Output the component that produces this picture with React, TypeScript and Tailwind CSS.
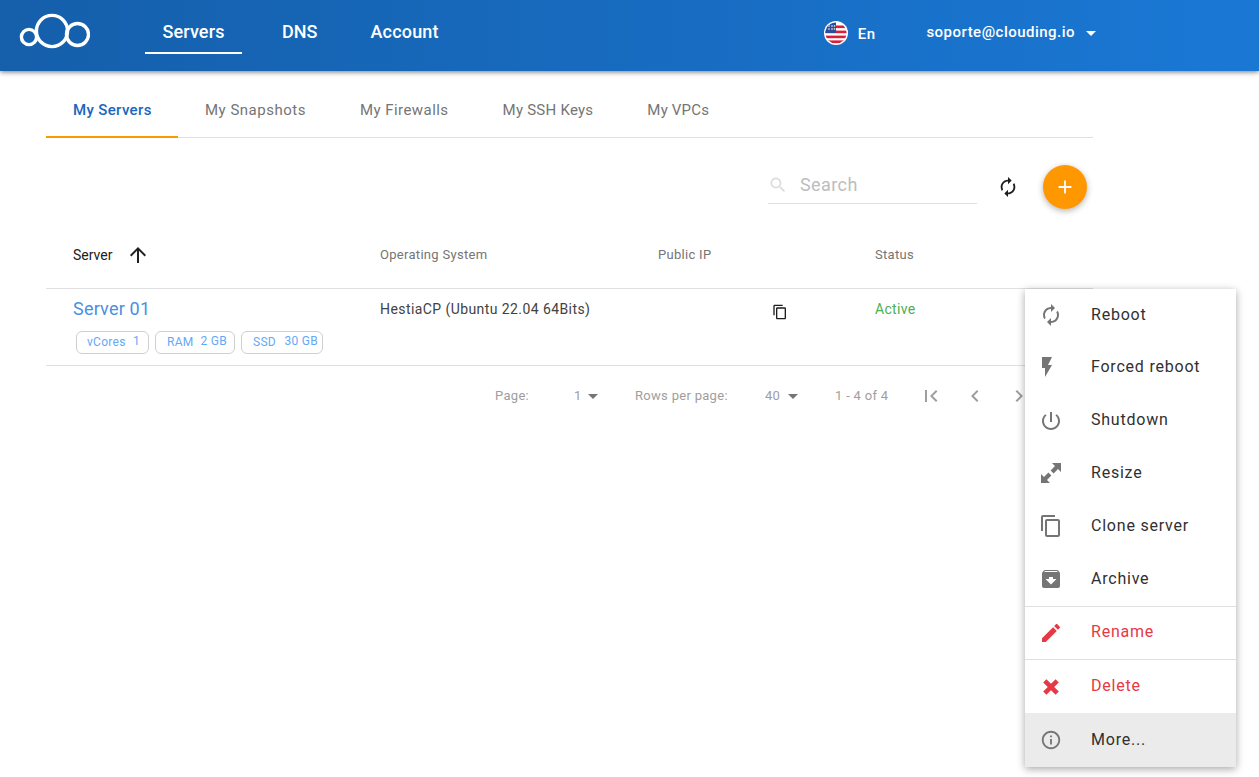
import React from 'react';

const tabs = [
  { label: 'My Snapshots', tracking: 'tracking-[0.5px]' },
  { label: 'My Firewalls', tracking: 'tracking-[0.45px]' },
  { label: 'My SSH Keys', tracking: 'tracking-[0.25px]' },
  { label: 'My VPCs', tracking: 'tracking-[0.2px]' },
];

const Icon: React.FC<{ d: string; className?: string }> = ({ d, className }) => (
  <svg viewBox="0 0 24 24" fill="currentColor" className={className}>
    <path d={d} />
  </svg>
);

const ICONS = {
  renew: 'M12 6v3l4-4-4-4v3c-4.42 0-8 3.58-8 8 0 1.57.46 3.03 1.24 4.26L6.7 14.8c-.45-.83-.7-1.79-.7-2.8 0-3.31 2.69-6 6-6zm6.76 1.74L17.3 9.2c.44.84.7 1.79.7 2.8 0 3.31-2.69 6-6 6v-3l-4 4 4 4v-3c4.42 0 8-3.58 8-8 0-1.57-.46-3.03-1.24-4.26z',
  flash: 'M7 2v11h3v9l7-12h-4l4-8z',
  power: 'M13 3h-2v10h2V3zm4.83 2.17l-1.42 1.42C17.99 7.86 19 9.81 19 12c0 3.87-3.13 7-7 7s-7-3.13-7-7c0-2.19 1.01-4.14 2.58-5.42L6.17 5.17C4.23 6.82 3 9.26 3 12c0 4.97 4.03 9 9 9s9-4.03 9-9c0-2.74-1.23-5.18-3.17-6.83z',
  resize: 'M22 2H13l3 3-4.4 4.4 3 3L19 8l3 3zM2 22h9l-3-3 4.4-4.4-3-3L5 16l-3-3z',
  copy: 'M16 1H4c-1.1 0-2 .9-2 2v14h2V3h12V1zm3 4H8c-1.1 0-2 .9-2 2v14c0 1.1.9 2 2 2h11c1.1 0 2-.9 2-2V7c0-1.1-.9-2-2-2zm0 16H8V7h11v14z',
  archive: 'M20.54 5.23l-1.39-1.68C18.88 3.21 18.47 3 18 3H6c-.47 0-.88.21-1.16.55L3.46 5.23C3.17 5.57 3 6.02 3 6.5V19c0 1.1.9 2 2 2h14c1.1 0 2-.9 2-2V6.5c0-.48-.17-.93-.46-1.27zM12 17.5L6.5 12H10v-2h4v2h3.5L12 17.5zM5.12 5l.81-1h12l.94 1H5.12z',
  edit: 'M3 17.25V21h3.75L17.81 9.94l-3.75-3.75L3 17.25zM20.71 7.04c.39-.39.39-1.02 0-1.41l-2.34-2.34c-.39-.39-1.02-.39-1.41 0l-1.83 1.83 3.75 3.75 1.83-1.83z',
  close: 'M7 3.5L12 8.5L17 3.5L20.5 7L15.5 12L20.5 17L17 20.5L12 15.5L7 20.5L3.5 17L8.5 12L3.5 7z',
  info: 'M11 7h2v2h-2zm0 4h2v6h-2zm1-9C6.48 2 2 6.48 2 12s4.48 10 10 10 10-4.48 10-10S17.52 2 12 2zm0 18c-4.41 0-8-3.59-8-8s3.59-8 8-8 8 3.59 8 8-3.59 8-8 8z',
  first: 'M18.41 16.59L13.82 12l4.59-4.59L17 6l-6 6 6 6zM6 6h2v12H6z',
  prev: 'M15.41 7.41L14 6l-6 6 6 6 1.41-1.41L10.83 12z',
  next: 'M10 6L8.59 7.41 13.17 12l-4.58 4.59L10 18l6-6z',
  up: 'M4 12l1.41 1.41L11 7.83V20h2V7.83l5.58 5.59L20 12l-8-8-8 8z',
  search: 'M15.5 14h-.79l-.28-.27C15.41 12.59 16 11.11 16 9.5 16 5.91 13.09 3 9.5 3S3 5.91 3 9.5 5.91 16 9.5 16c1.61 0 3.09-.59 4.23-1.57l.27.28v.79l5 4.99L20.49 19l-4.99-5zm-6 0C7.01 14 5 11.99 5 9.5S7.01 5 9.5 5 14 7.01 14 9.5 11.99 14 9.5 14z',
  plus: 'M19 13h-6v6h-2v-6H5v-2h6V5h2v6h6v2z',
};

const menuItems = [
  { label: 'Reboot', icon: ICONS.renew, row: 'h-[52px]', text: '', iconPos: '' },
  { label: 'Forced reboot', icon: ICONS.flash, row: 'h-[53px] pb-[2px]', text: '', iconPos: '-translate-x-[4px]' },
  { label: 'Shutdown', icon: ICONS.power, row: 'h-[53px]', text: 'mb-[2px]', iconPos: '' },
  { label: 'Resize', icon: ICONS.resize, row: 'h-[53px] pb-[2px]', text: '', iconPos: '' },
  { label: 'Clone server', icon: ICONS.copy, row: 'h-[53px] pb-[2px]', text: '', iconPos: '' },
  { label: 'Archive', icon: ICONS.archive, row: 'h-[53px] pb-[2px]', text: '', iconPos: '' },
];

const Logo = () => (
  <svg viewBox="0 5 90 60" className="h-[60px] w-[90px]" fill="none" stroke="white" strokeWidth="3.4">
    <circle cx="29" cy="36" r="7.6" />
    <circle cx="52" cy="30" r="15.6" />
    <circle cx="77.5" cy="33.5" r="11" />
  </svg>
);

const Flag = () => (
  <svg viewBox="0 0 24 24" className="h-[24px] w-[24px]">
    <defs>
      <clipPath id="flag">
        <circle cx="12" cy="12" r="10.6" />
      </clipPath>
    </defs>
    <circle cx="12" cy="12" r="12" fill="white" />
    <g clipPath="url(#flag)">
      <rect width="24" height="24" fill="white" />
      <rect y="4.5" width="24" height="2.6" fill="#d8203a" />
      <rect y="9.6" width="24" height="2.6" fill="#d8203a" />
      <rect y="14.6" width="24" height="2.6" fill="#d8203a" />
      <rect y="19.4" width="24" height="3" fill="#d8203a" />
      <rect width="12" height="12" fill="#2b4d9b" />
      <circle cx="5" cy="5" r="0.8" fill="white" />
      <circle cx="8" cy="5" r="0.8" fill="white" />
      <circle cx="5" cy="8" r="0.8" fill="white" />
      <circle cx="8" cy="8" r="0.8" fill="white" />
      <circle cx="10.5" cy="8" r="0.8" fill="white" />
      <circle cx="10.5" cy="5" r="0.8" fill="white" />
    </g>
  </svg>
);

const Chip: React.FC<{ label: string; value: string; className: string }> = ({ label, value, className }) => (
  <div className={`flex h-[23px] items-center justify-between rounded-[6px] border border-[#cfcfcf] text-[12px] text-[#64a9f7] ${className}`}>
    <span className="mb-[1px] tracking-[0.3px]">{label}</span>
    <span className="mb-[3px] tracking-[0.3px]">{value}</span>
  </div>
);

const Caret = () => <span className="h-0 w-0 border-x-[5px] border-t-[5px] border-x-transparent border-t-[#757575]" />;

export default function App() {
  return (
    <div className="relative h-[777px] overflow-hidden bg-white font-['Roboto',sans-serif]">
      <header className="relative z-10 flex h-[71px] items-center bg-gradient-to-r from-[#155fab] to-[#1a78d5] pr-[162px] text-white shadow-[0_1px_5px_rgba(0,0,0,0.55)]">
        <div className="w-[145px]">
          <Logo />
        </div>
        <nav className="flex h-full items-start text-[18px] font-medium">
          <div className="mt-[10px] flex h-[44px] w-[97px] items-center justify-center border-b-2 border-white pt-[1px] tracking-[0.15px]">Servers</div>
          <div className="mt-[10px] ml-[40px] flex h-[44px] items-center pb-[1px]">DNS</div>
          <div className="mt-[10px] ml-[53px] flex h-[44px] items-center pb-[1px] tracking-[0.2px]">Account</div>
        </nav>
        <div className="mb-[5px] ml-auto mr-[1px] flex items-center gap-[10px]">
          <Flag />
          <span className="mt-[2px] text-[15px] font-medium tracking-[0.4px]">En</span>
        </div>
        <span className="mb-[6px] ml-[50px] text-[15px] font-medium tracking-[0.48px]">soporte@clouding.io</span>
        <span className="mb-[5px] ml-[11px] mr-[1px] h-0 w-0 border-x-[5.5px] border-t-[5px] border-x-transparent border-t-white" />
      </header>

      <main className="ml-[46px] w-[1047px]">
        <div className="mt-[14px] flex h-[53px] border-b border-[#e0e0e0] text-[15px] text-[#757575]">
          <div className="flex h-[53px] w-[132px] items-center border-b-2 border-[#ff9800] pb-[1px] pl-[27px] font-medium tracking-[0.36px] text-[#1a66bd]">My Servers</div>
          {tabs.map(t => (
            <div key={t.label} className={`flex h-[53px] items-center px-[27px] pb-[3px] ${t.tracking}`}>
              {t.label}
            </div>
          ))}
        </div>

        <div className="mt-[27px] flex h-[44px] items-center justify-end pr-[6px]">
          <div className="mb-[2px] mr-[20px] flex h-[36px] w-[209px] items-center border-b border-[#e0e0e0] pb-[2px] text-[#bdbdbd]">
            <Icon d={ICONS.search} className="h-[20px] w-[20px] text-[#dcdcdc]" />
            <span className="ml-[12px] text-[18px] tracking-[0.4px]">Search</span>
          </div>
          <Icon d={ICONS.renew} className="mr-[24px] h-[22px] w-[22px] text-[#1d1d1d]" />
          <div className="flex h-[44px] w-[44px] items-center justify-center rounded-full bg-[#ff9800] text-white shadow-[0_2px_6px_rgba(0,0,0,0.3)]">
            <Icon d={ICONS.plus} className="h-[22px] w-[22px]" />
          </div>
        </div>

        <div className="mt-[27px] grid h-[53px] grid-cols-[307px_278px_217px_1fr] items-center border-b border-[#e0e0e0] pb-[14px] pl-[27px] text-[13px] tracking-[0.3px] text-[#757575]">
          <div className="flex items-center text-[#212121]">
            <span className="text-[14px] tracking-[0px]">Server</span>
            <Icon d={ICONS.up} className="ml-[14px] h-[24px] w-[24px] text-[#212121]" />
          </div>
          <div>Operating System</div>
          <div>Public IP</div>
          <div>Status</div>
        </div>

        <div className="grid h-[77px] grid-cols-[307px_278px_217px_1fr] border-b border-[#e0e0e0] pl-[27px]">
          <div>
            <div className="mt-[8px] text-[18px] leading-[24px] tracking-[0.2px] text-[#4a90e2]">Server 01</div>
            <div className="ml-[3px] mt-[10px] flex gap-[6px]">
              <Chip label="vCores" value="1" className="w-[73px] pl-[10px] pr-[8px]" />
              <Chip label="RAM" value="2 GB" className="w-[80px] pl-[11px] pr-[7px]" />
              <Chip label="SSD" value="30 GB" className="w-[82px] pl-[11px] pr-[4px]" />
            </div>
          </div>
          <div className="mt-[12px] text-[14px] leading-[17px] tracking-[0.42px] text-[#424242]">HestiaCP (Ubuntu 22.04 64Bits)</div>
          <div>
            <Icon d={ICONS.copy} className="ml-[114px] mt-[15px] h-[16px] w-[16px] text-[#1d1d1d]" />
          </div>
          <div className="mt-[12px] text-[14px] leading-[17px] tracking-[0.3px] text-[#4caf50]">Active</div>
        </div>

        <div className="mt-[17px] flex h-[26px] items-center pl-[449px] text-[13px] tracking-[0.3px] text-[#9e9e9e]">
          <span className="w-[79px]">Page:</span>
          <span className="w-[14px]">1</span>
          <Caret />
          <span className="ml-[37px] w-[130px]">Rows per page:</span>
          <span className="w-[23px]">40</span>
          <Caret />
          <span className="ml-[37px] w-[84px]">1 - 4 of 4</span>
          <Icon d={ICONS.first} className="h-[24px] w-[24px] text-[#9e9e9e]" />
          <Icon d={ICONS.prev} className="ml-[20px] h-[24px] w-[24px] text-[#9e9e9e]" />
          <Icon d={ICONS.next} className="ml-[20px] h-[24px] w-[24px] text-[#9e9e9e]" />
        </div>
      </main>

      {/* context menu, sits over the table */}
      <div className="absolute left-[1025px] top-[289px] z-20 w-[211px] bg-white text-[16px] tracking-[0.78px] text-[#303030] shadow-[0_2px_8px_rgba(0,0,0,0.35)]">
        {menuItems.map(item => (
          <div key={item.label} className={`flex items-center pl-[14px] ${item.row}`}>
            <Icon d={item.icon} className={`h-[24px] w-[24px] text-[#757575] ${item.iconPos}`} />
            <span className={`ml-[28px] ${item.text}`}>{item.label}</span>
          </div>
        ))}
        <div className="flex h-[53px] items-center border-t border-[#e0e0e0] pl-[14px] text-[#e53945]">
          <Icon d={ICONS.edit} className="h-[24px] w-[24px] text-[#e53945]" />
          <span className="mb-[2px] ml-[28px]">Rename</span>
        </div>
        <div className="flex h-[54px] items-center border-t border-[#e0e0e0] pl-[14px] text-[#e53945]">
          <Icon d={ICONS.close} className="h-[22px] w-[24px] text-[#e53945]" />
          <span className="mb-[2px] ml-[28px]">Delete</span>
        </div>
        <div className="flex h-[54px] items-center bg-[#ebebeb] pl-[14px]">
          <Icon d={ICONS.info} className="h-[22px] w-[24px] text-[#757575]" />
          <span className="ml-[28px]">More...</span>
        </div>
      </div>
    </div>
  );
}
